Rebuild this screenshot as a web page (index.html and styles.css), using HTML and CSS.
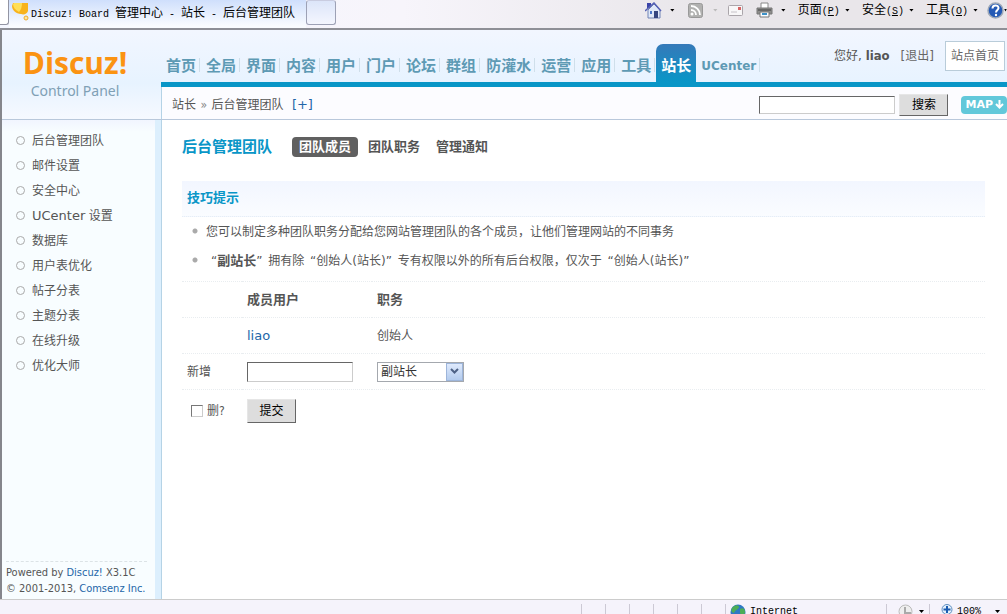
FILE: index.html
```html
<!DOCTYPE html>
<html lang="zh-CN">
<head>
<meta charset="utf-8">
<meta name="viewport" content="width=device-width, initial-scale=1">
<title>Discuz! Board 管理中心 - 站长 - 后台管理团队</title>
<link rel="stylesheet" href="styles.css">
</head>
<body>
<div class="window">
  <div class="browser-bar">
    <div class="tab-prev"></div>
    <div class="tab-current">
      <svg class="tab-icon" width="17" height="18" viewBox="0 0 17 18" aria-hidden="true">
        <path d="M1 0h15v8c-1 3-4 4-7 3C4 11 0 7 0 3z" fill="#f8b31c"/>
        <path d="M2 0h8c0 4-1 7-3 9C3 7 1 4 1 1z" fill="#ffdf58"/>
        <circle cx="14" cy="15" r="2" fill="#fde9a0" stroke="#f0a92a"/>
      </svg>
      <span class="mixed">Discuz! Board <span class="han">管理中心</span> - <span class="han">站长</span> - <span class="han">后台管理团队</span></span>
    </div>
    <div class="tab-new"></div>
    <div class="toolbar">
      <button class="tool" type="button" aria-label="主页">
        <svg width="17" height="17" viewBox="0 0 17 17"><path d="M2 1h4v5H2z" fill="#3a43a8"/><path d="M3 8l6-6 6 6v8H3z" fill="#dfe8f8" stroke="#7183b5"/><path d="M0 9l9-8 7 8" fill="none" stroke="#5561b4" stroke-width="1.500"/><path d="M9 9h4v7H9z" fill="#34457f"/><path d="M5 9h2v3H5z" fill="#4c76c8"/></svg>
        <i class="caret"></i>
      </button>
      <button class="tool tool-feed" type="button" aria-label="源">
        <svg width="15" height="15" viewBox="0 0 15 15"><rect x=".5" y=".5" width="14" height="14" rx="2" fill="#b1b1b0" stroke="#999"/><circle cx="4" cy="11" r="1.500" fill="#fff"/><path d="M3 7a5 5 0 0 1 5 5M3 3a9 9 0 0 1 9 9" fill="none" stroke="#fff" stroke-width="1.800"/></svg>
        <i class="caret caret-off"></i>
      </button>
      <button class="tool tool-mail" type="button" aria-label="阅读邮件">
        <svg width="15" height="11" viewBox="0 0 15 11"><rect x=".5" y=".5" width="14" height="10" rx="1" fill="#f8f7f8" stroke="#aaa5aa"/><path d="M10 2h3v3h-3z" fill="#d76464"/><path d="M3 7h6" stroke="#c6c2c8"/></svg>
      </button>
      <button class="tool tool-print" type="button" aria-label="打印">
        <svg width="17" height="16" viewBox="0 0 17 16"><path d="M5 1h7v6H5z" fill="#fff" stroke="#888"/><path d="M1 6h15v6H1z" fill="#8d8d8b" stroke="#777"/><path d="M2 7h13v2H2z" fill="#666"/><path d="M4 10h9v5H4z" fill="#fafcff" stroke="#777"/><path d="M6 11h5v2H6z" fill="#3d91c8"/></svg>
        <i class="caret"></i>
      </button>
      <button class="tool tool-text" type="button"><span class="mixed"><span class="han">页面</span>(<u>P</u>)</span><i class="caret"></i></button>
      <button class="tool tool-text" type="button"><span class="mixed"><span class="han">安全</span>(<u>S</u>)</span><i class="caret"></i></button>
      <button class="tool tool-text" type="button"><span class="mixed"><span class="han">工具</span>(<u>O</u>)</span><i class="caret"></i></button>
      <button class="tool tool-help" type="button" aria-label="帮助">
        <svg width="17" height="17" viewBox="0 0 17 17"><circle cx="8.500" cy="8.500" r="7.500" fill="#2459b5" stroke="#9fa9b8" stroke-width="1.500"/><path d="M5.500 6.500c0-4 6-4 6-.5 0 2-2.500 2-2.500 4.500" fill="none" stroke="#fff" stroke-width="2"/><circle cx="9" cy="13" r="1.200" fill="#fff"/></svg>
        <i class="caret"></i>
      </button>
    </div>
  </div>

  <div class="page">
    <header class="header">
      <div class="brand">
        <strong>Discuz!</strong>
        <span>Control Panel</span>
      </div>
      <div class="header-main">
        <div class="nav-row">
          <nav class="nav">
            <a href="#">首页</a><a href="#">全局</a><a href="#">界面</a><a href="#">内容</a><a href="#">用户</a><a href="#">门户</a><a href="#">论坛</a><a href="#">群组</a><a href="#">防灌水</a><a href="#">运营</a><a href="#">应用</a><a href="#">工具</a><a class="active" href="#">站长</a><a class="latin" href="#">UCenter</a>
          </nav>
          <div class="account">
            <span>您好, <b>liao</b></span>
            <a href="#">[退出]</a>
            <a class="site-home" href="#">站点首页</a>
          </div>
        </div>
        <div class="crumb-row">
          <div class="crumb">站长 <span class="raquo">»</span> 后台管理团队 <a href="#">[+]</a></div>
          <form class="search">
            <input class="field search-field" type="text" aria-label="搜索">
            <button class="push" type="button">搜索</button>
            <button class="map" type="button">MAP<svg width="9" height="9" viewBox="0 0 9 9" aria-hidden="true"><path d="M4.500 0v7M1 4l3.500 3.500L8 4" fill="none" stroke="#fff" stroke-width="2"/></svg></button>
          </form>
        </div>
      </div>
    </header>

    <div class="body">
      <aside class="sidebar">
        <ul class="menu">
          <li><a href="#">后台管理团队</a></li>
          <li><a href="#">邮件设置</a></li>
          <li><a href="#">安全中心</a></li>
          <li><a href="#"><span class="menu-latin">UCenter</span> 设置</a></li>
          <li><a href="#">数据库</a></li>
          <li><a href="#">用户表优化</a></li>
          <li><a href="#">帖子分表</a></li>
          <li><a href="#">主题分表</a></li>
          <li><a href="#">在线升级</a></li>
          <li><a href="#">优化大师</a></li>
        </ul>
        <footer class="copyright">
          <p>Powered by <a href="#">Discuz!</a> X3.1C</p>
          <p>© 2001-2013, <a href="#">Comsenz Inc.</a></p>
        </footer>
      </aside>

      <main class="content">
        <div class="title-row">
          <h1>后台管理团队</h1>
          <nav class="subnav">
            <a class="current" href="#">团队成员</a>
            <a href="#">团队职务</a>
            <a href="#">管理通知</a>
          </nav>
        </div>
        <section class="tips">
          <h2>技巧提示</h2>
          <ul>
            <li>您可以制定多种团队职务分配给您网站管理团队的各个成员，让他们管理网站的不同事务</li>
            <li class="quoted"><span class="term">“<b>副站长</b>”</span> 拥有除 <span class="term">“创始人(站长)”</span> 专有权限以外的所有后台权限，仅次于 <span class="term">“创始人(站长)”</span></li>
          </ul>
        </section>
        <form>
          <table class="members">
            <colgroup><col class="col-label"><col class="col-user"><col></colgroup>
            <thead>
              <tr><td></td><th scope="col">成员用户</th><th scope="col">职务</th></tr>
            </thead>
            <tbody>
              <tr><td></td><td><a class="user" href="#">liao</a></td><td>创始人</td></tr>
              <tr>
                <td><label for="newuser">新增</label></td>
                <td><input class="field user-field" id="newuser" type="text"></td>
                <td>
                  <span class="picker">
                    <select aria-label="职务"><option>副站长</option></select>
                    <span class="picker-arrow"><svg width="9" height="7" viewBox="0 0 9 7" aria-hidden="true"><path d="M1 1l3.500 3.500L8 1" fill="none" stroke="#4d6185" stroke-width="2"/></svg></span>
                  </span>
                </td>
              </tr>
              <tr class="actions">
                <td><label class="remove"><input type="checkbox">删?</label></td>
                <td colspan="2"><button class="push" type="button">提交</button></td>
              </tr>
            </tbody>
          </table>
        </form>
      </main>
    </div>
  </div>

  <div class="status-bar">
    <i></i><i></i><i></i><i></i><i></i><i></i>
    <div class="zone">
      <svg width="16" height="16" viewBox="0 0 16 16" aria-hidden="true"><circle cx="8" cy="8" r="7.500" fill="#2f79c4"/><path d="M2 4c3-4 7-3 7-1S5 6 4 9C1 8 1 6 2 4zM10 5c3-2 5 0 5 3s-4 4-5 1z" fill="#4dae57"/></svg>
      <span>Internet</span>
    </div>
    <div class="shield">
      <svg width="15" height="15" viewBox="0 0 15 15" aria-hidden="true"><circle cx="7.500" cy="7.500" r="6.500" fill="#eee" stroke="#bbb"/><path d="M7 3v6h6" fill="none" stroke="#aaa" stroke-width="2"/></svg>
      <i class="caret"></i>
    </div>
    <div class="zoom">
      <svg width="12" height="14" viewBox="0 0 12 14" aria-hidden="true"><circle cx="6" cy="5.500" r="5" fill="#e4f0fb" stroke="#5f8fc0"/><path d="M6 2v7M2.500 5.500h7" stroke="#1b5bb0" stroke-width="2"/></svg>
      <span>100%</span>
      <i class="caret"></i>
    </div>
  </div>
</div>
</body>
</html>
```
FILE: styles.css
```css
* {
  box-sizing: border-box;
}

body {
  margin: 0;
  color: #555;
  font: 12px/18px "DejaVu Sans Condensed", "Noto Sans CJK SC", sans-serif;
}

a {
  color: #2366a8;
  text-decoration: none;
}

h1, h2, p, ul {
  margin: 0;
  padding: 0;
}

ul {
  list-style: none;
}

button, input, select {
  margin: 0;
  font: inherit;
}

.window {
  display: flex;
  flex-direction: column;
  height: 100vh;
  overflow: hidden;
}

/* Browser chrome */
.browser-bar {
  display: flex;
  flex: none;
  height: 30px;
  overflow: hidden;
  border-bottom: 2px solid #8e8f96;
  background: linear-gradient(90deg, #f5f7ff, #f7f5fb 40%, #e9e6ea 70%);
  color: #000;
}

.mixed {
  font-size: 10px;
  font-family: "Liberation Mono", monospace;
}

.han {
  font-size: 12px;
  font-family: "Noto Sans CJK SC", sans-serif;
}

.tab-prev {
  width: 9px;
  height: 25px;
  border-right: 1px solid #9395a3;
  border-bottom: 1px solid #9395a3;
  border-radius: 0 0 3px 0;
  background: #fff;
}

.tab-current {
  display: flex;
  gap: 2px;
  width: 297px;
  padding: 3px 0 0 3px;
  background: linear-gradient(#cfdffc, #fafcff 26px);
  line-height: 18px;
  white-space: nowrap;
}

.tab-icon {
  flex: none;
}

.tab-new {
  width: 30px;
  height: 25px;
  border: 1px solid #9da1b5;
  border-top-color: #c9cce0;
  border-radius: 3px;
  background: linear-gradient(#dce5f9, #f4f6fe);
}

.toolbar {
  display: flex;
  flex: none;
  align-items: center;
  height: 20px;
  margin-left: auto;
}

.tool {
  display: flex;
  align-items: center;
  gap: 8px;
  padding: 0;
  border: 0;
  background: none;
  color: #000;
  white-space: nowrap;
}

.tool-feed {
  gap: 10px;
  margin-left: 13px;
}

.tool-mail {
  margin-left: 10px;
}

.tool-print {
  margin-left: 13px;
}

.tool-text {
  gap: 5px;
  margin-left: 12px;
}

.tool-help {
  gap: 0;
  margin-left: 9px;
}

.caret {
  flex: none;
  width: 5px;
  height: 3px;
  background: currentColor;
  clip-path: polygon(0 0, 100% 0, 50% 100%);
}

.tool-help .caret {
  width: 3px;
}

.caret-off {
  color: #bbb;
}

/* Page header */
.page {
  display: flex;
  flex: 1;
  flex-direction: column;
  min-height: 0;
  border-left: 2px solid #85868c;
}

.header {
  display: flex;
  flex: none;
  border-bottom: 1px solid #b9c8db;
  background: linear-gradient(#f2f6ff, #e7f3ff 60%, #f6f9ff);
}

.brand {
  display: flex;
  flex: none;
  flex-direction: column;
  align-items: center;
  width: 159px;
  padding: 12px 13px 0 0;
}

.brand strong {
  color: #fb9312;
  font: 700 30px/42px "Open Sans", sans-serif;
}

.brand span {
  color: #7fa0b5;
  font: 14px/14px "Noto Sans", sans-serif;
}

.header-main {
  flex: 1;
  min-width: 0;
}

.nav-row {
  display: flex;
  align-items: flex-end;
  height: 57px;
  border-bottom: 5px solid #0996c7;
}

.nav {
  display: flex;
  flex: none;
  align-items: flex-end;
}

.nav a {
  height: 24px;
  padding: 0 4px 0 5px;
  color: #5e9ab4;
  font: 700 15px/14px "Noto Sans CJK SC", sans-serif;
  background: linear-gradient(#cfdfea, #cfdfea) right top / 1px 14px no-repeat;
  border-right: 1px solid transparent;
}

.nav .latin {
  font: 700 12px/16px "DejaVu Sans", sans-serif;
}

.nav .active {
  height: 38px;
  padding: 14px 5px 0;
  border: 0;
  border-radius: 7px 7px 0 0;
  background: linear-gradient(#3579b9, #0996c7);
  color: #fff;
}

.account {
  display: flex;
  flex: none;
  align-items: center;
  align-self: flex-start;
  gap: 11px;
  margin: 11px 2px 0 auto;
  font-family: "DejaVu Sans", "Noto Sans CJK SC", sans-serif;
  white-space: nowrap;
}

.account a {
  color: #666;
}

.account b {
  font-size: 13px;
  font-family: "DejaVu Sans Condensed", sans-serif;
}

.account .site-home {
  padding: 5px;
  border: 1px solid #b9ccd9;
  background: #fff;
}

.crumb-row {
  display: flex;
  align-items: center;
  justify-content: space-between;
  height: 32px;
  padding: 3px 0 0 10px;
  border-left: 1px solid #b5d3e6;
  background: #fcfcff;
}

.crumb a {
  margin-left: 5px;
  font-size: 13px;
  font-family: "DejaVu Sans", sans-serif;
}

.raquo {
  margin: 0 1px;
  color: #888;
}

.search {
  display: flex;
  align-items: center;
}

.field {
  border: 1px solid #ccc;
  border-top-color: #666;
  border-left-color: #666;
  background: #fff;
}

.search-field {
  width: 136px;
  height: 18px;
  margin-right: 4px;
}

.push {
  width: 49px;
  height: 22px;
  padding: 0;
  border: 1px solid #e6e6e6;
  border-right-color: #666;
  border-bottom-color: #666;
  background: #ddd;
  color: #000;
}

.map {
  display: flex;
  align-items: center;
  gap: 2px;
  height: 18px;
  margin-left: 13px;
  padding: 0 3px 0 4px;
  border: 0;
  border-radius: 4px;
  background: #62c8da;
  color: #fff;
  font: 700 11px/18px "DejaVu Sans", sans-serif;
}

/* Sidebar */
.body {
  display: flex;
  flex: 1;
  min-height: 0;
}

.sidebar {
  display: flex;
  flex: none;
  flex-direction: column;
  justify-content: space-between;
  width: 160px;
  border-right: 1px solid #b5d3e6;
  background: linear-gradient(90deg, transparent 153px, #dceffd 153px), linear-gradient(#f1f5ff, #f8fdff 12px);
}

.menu {
  padding-top: 8px;
}

.menu li {
  display: flex;
  align-items: center;
  gap: 7px;
  height: 25px;
  padding-left: 14px;
}

.menu li::before {
  width: 7px;
  height: 7px;
  border: 1px solid #aaa;
  border-radius: 50%;
  content: "";
}

.menu a {
  color: #555;
}

.menu-latin {
  font: 13px/18px "DejaVu Sans", sans-serif;
}

.copyright {
  margin: 0 14px 2px 4px;
  padding-top: 3px;
  border-top: 1px dashed #dce3e6;
  font: 11px/16px "DejaVu Sans Condensed", sans-serif;
  white-space: nowrap;
}

/* Content */
.content {
  flex: 1;
  min-width: 0;
  padding: 17px 22px 0 20px;
  background: #fff;
}

.title-row {
  display: flex;
  align-items: center;
  gap: 20px;
}

.title-row h1 {
  color: #0996c7;
  font-size: 15px;
  line-height: 20px;
}

.subnav {
  display: flex;
  gap: 4px;
}

.subnav a {
  padding: 1px 6px;
  border-radius: 4px;
  color: #555;
  font-weight: 700;
  font-size: 13px;
}

.subnav .current {
  padding: 1px 7px;
  background: #606060;
  color: #fff;
}

.tips {
  margin-top: 24px;
}

.tips h2 {
  padding: 7px 5px 9px;
  border-bottom: 1px dotted #e6eef5;
  background: linear-gradient(#f2f6ff, #fafcff);
  color: #0996c7;
  font-size: 13px;
  line-height: 19px;
}

.tips ul {
  padding: 1px 0 5px 10px;
}

.tips li {
  padding: 5px 0 6px 14px;
  background: radial-gradient(circle at 3px 13px, #aaa 2px, transparent 3px) no-repeat;
}

.tips .quoted {
  padding-left: 17px;
  font-family: "DejaVu Sans", "Noto Sans CJK SC", sans-serif;
}

.term {
  margin: 0 2px;
}

.tips b {
  font-size: 13px;
}

.members {
  width: 100%;
  border-collapse: collapse;
  table-layout: fixed;
  text-align: left;
}

.members td, .members th {
  height: 36px;
  padding: 0 0 0 5px;
  border-top: 1px dotted #e9edf0;
}

.members th {
  font-size: 13px;
}

.members .actions td {
  height: 42px;
}

.col-label {
  width: 60px;
}

.col-user {
  width: 130px;
}

.user {
  font-size: 13px;
  font-family: "DejaVu Sans", sans-serif;
}

.user-field {
  display: block;
  width: 106px;
  height: 20px;
}

.picker {
  display: flex;
  width: 87px;
  height: 20px;
  border: 1px solid #a4a8ae;
}

.picker select {
  flex: 1;
  min-width: 0;
  padding: 0 3px;
  border: 0;
  appearance: none;
  background: #fff;
  color: #333;
}

.picker-arrow {
  display: flex;
  align-items: center;
  justify-content: center;
  width: 17px;
  border: 1px solid #9db5da;
  background: linear-gradient(#dfeafd, #b3cbed);
  pointer-events: none;
}

.remove {
  display: flex;
  align-items: center;
  gap: 4px;
  padding-left: 4px;
}

.remove input {
  width: 12px;
  height: 12px;
  border: 1px solid #ccc;
  border-top-color: #777;
  border-left-color: #777;
  appearance: none;
  background: #fff;
}

.members .push {
  display: block;
  height: 24px;
}

/* Status bar */
.status-bar {
  display: flex;
  flex: none;
  justify-content: flex-end;
  height: 15px;
  padding-top: 4px;
  overflow: hidden;
  border-top: 1px solid #ccc;
  background: #f5f3fb;
  color: #000;
  font: 10px/16px "Liberation Mono", monospace;
}

.status-bar > i {
  width: 24px;
  border-left: 1px solid #ccc9d4;
}

.status-bar > div {
  display: flex;
  flex: none;
  gap: 4px;
  height: 16px;
  border-left: 1px solid #ccc9d4;
}

.status-bar .caret {
  margin-top: 6px;
}

.zone {
  width: 161px;
  padding-left: 4px;
}

.status-bar .shield {
  width: 43px;
  gap: 6px;
  padding-left: 11px;
}

.status-bar .zoom {
  width: 78px;
  padding-left: 11px;
}

.zoom .caret {
  margin-left: 10px;
}
```
